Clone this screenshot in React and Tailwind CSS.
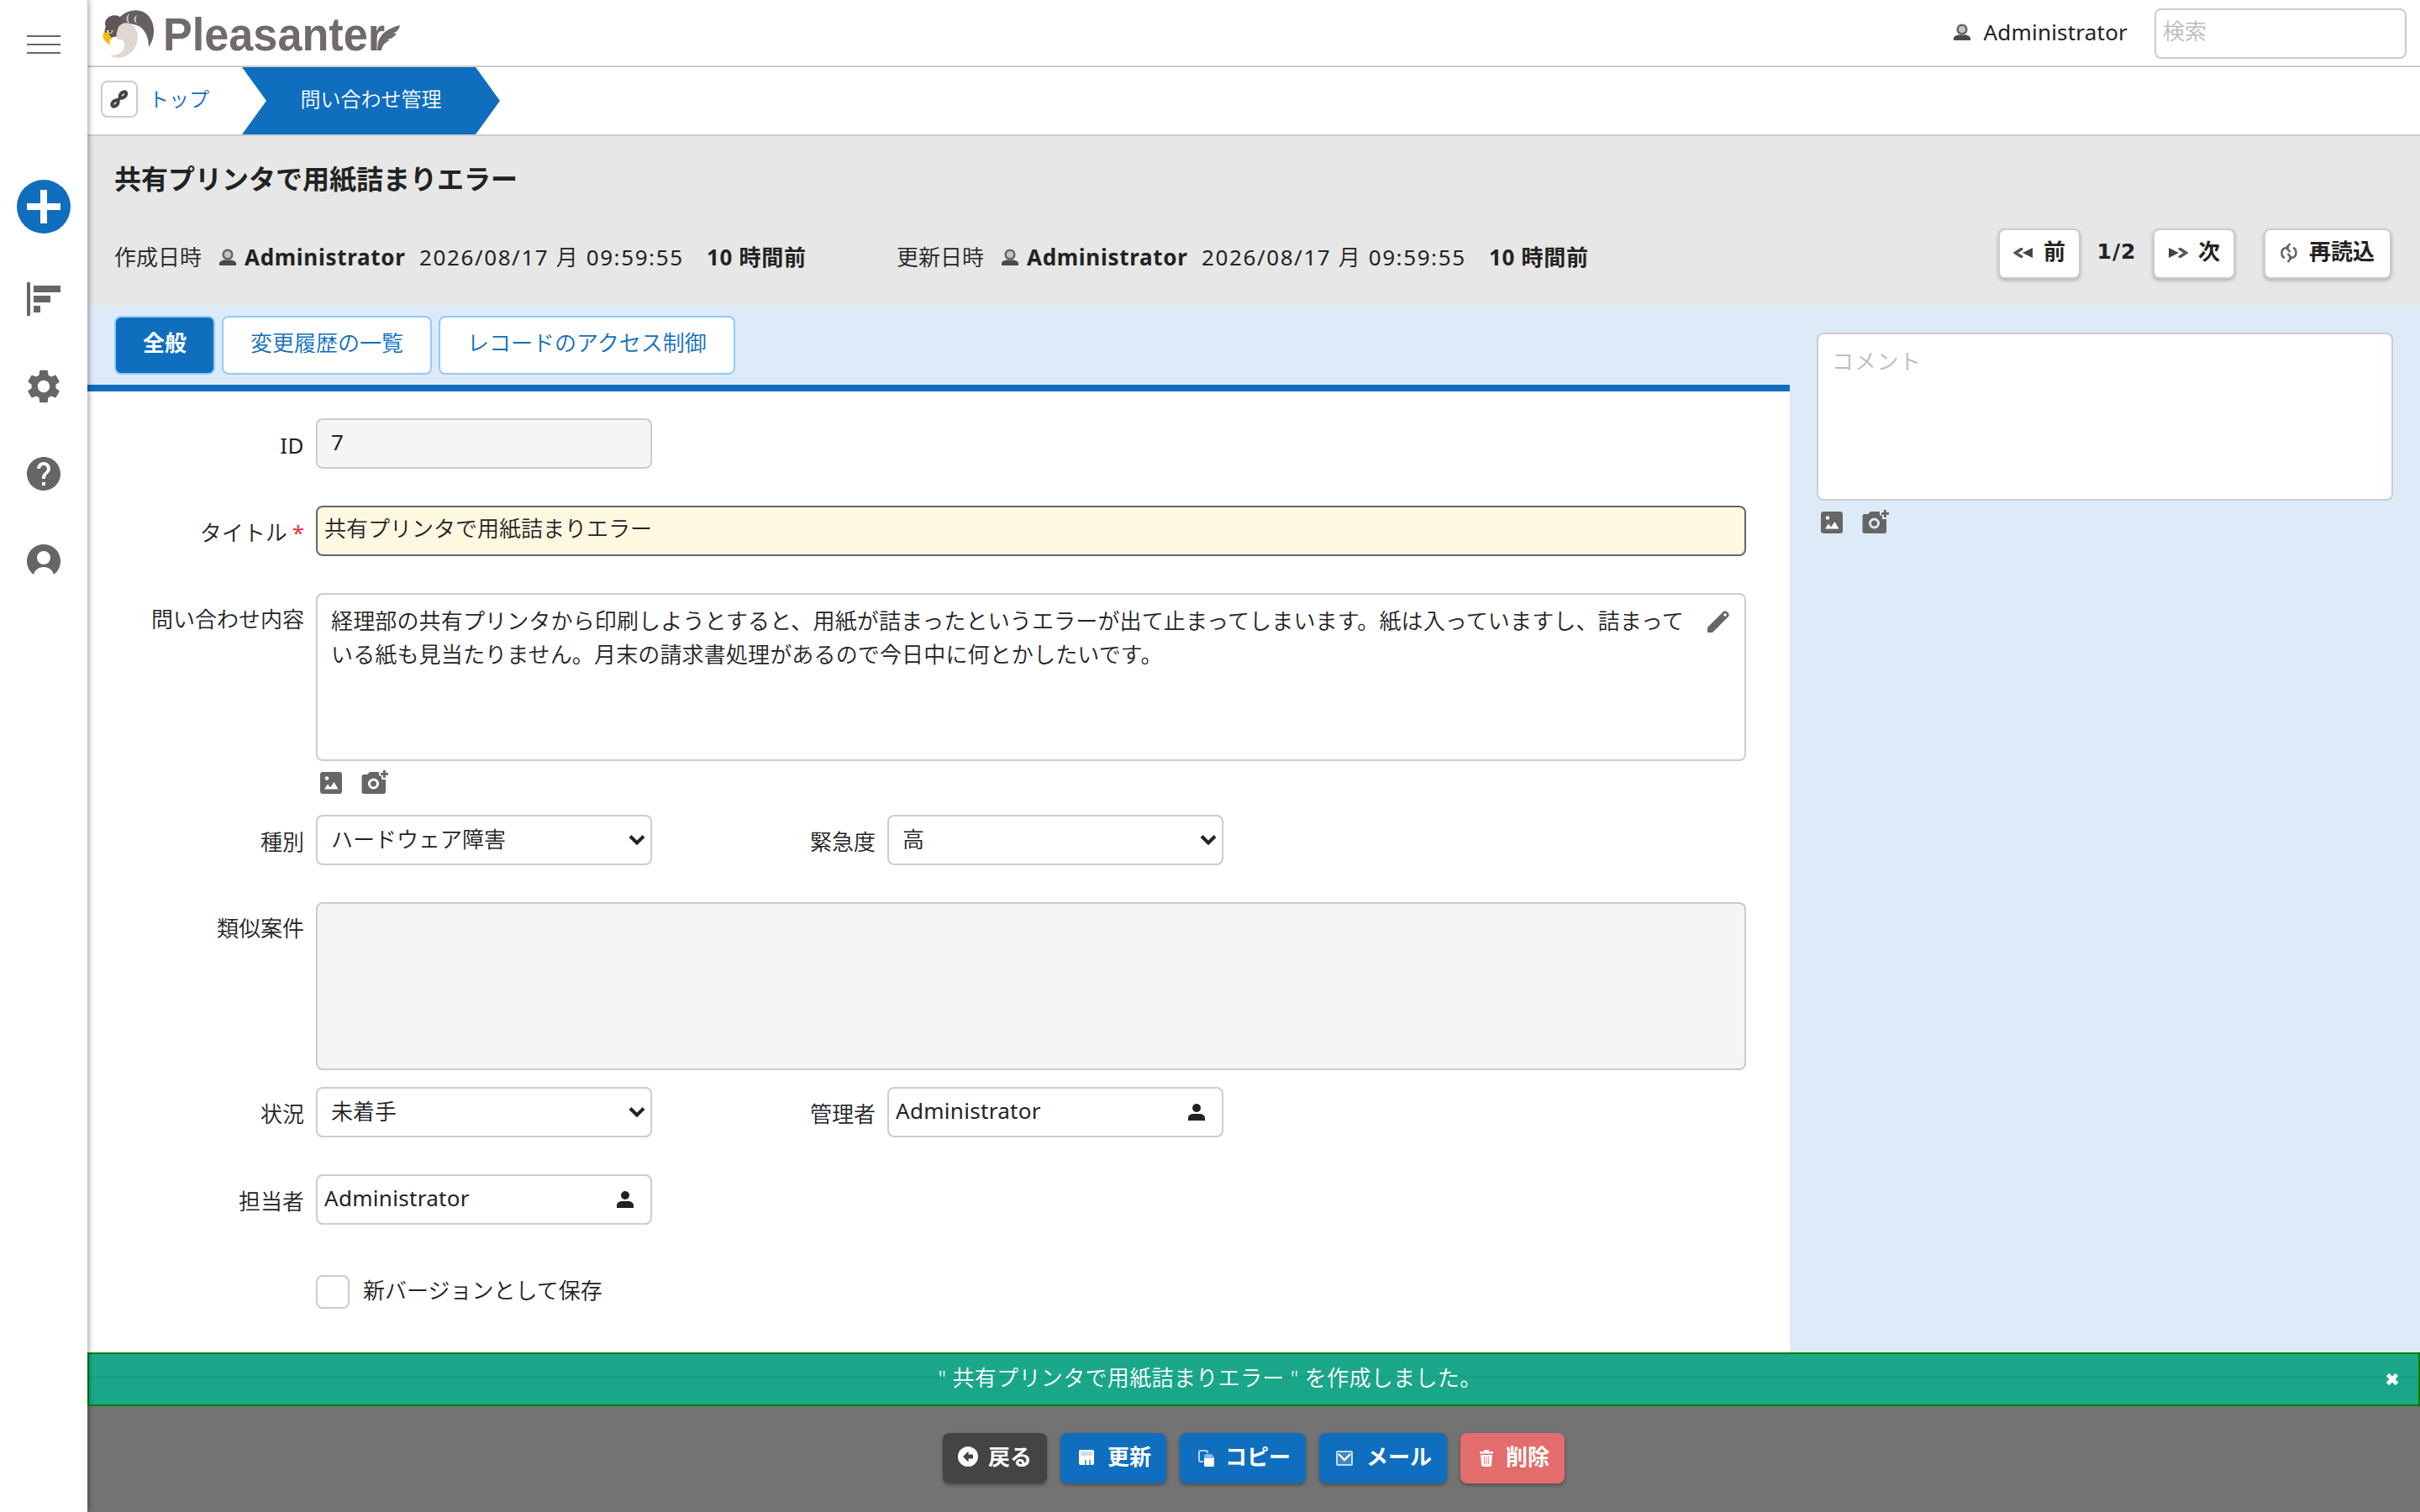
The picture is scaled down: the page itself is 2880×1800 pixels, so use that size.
import { MdSettings, MdHelp } from 'react-icons/md'

function PersonIcon({ className }) {
  return (
    <svg viewBox="0 0 20 20" className={className}>
      <path d="M0 20v-2.500c0-2.500 3-3 5.500-4h9c2.500 1 5.500 1.500 5.500 4V20z" fill="#4a4a4a" />
      <circle cx="10" cy="7" r="5.300" fill="#c4c4c4" stroke="#666" strokeWidth="2.600" />
    </svg>
  )
}

function UserIcon() {
  return (
    <svg viewBox="0 0 20 20" className="h-5 w-5" fill="#222">
      <circle cx="10" cy="5" r="5" />
      <path d="M0 20v-3c0-3.500 3.500-5 6-5h8c2.500 0 6 1.500 6 5v3z" />
    </svg>
  )
}

function AttachIcons({ className }) {
  return (
    <div className={`flex gap-[23px] ${className}`}>
      <svg viewBox="0 0 26 28" className="h-7 w-[26px]">
        <rect y="2" width="26" height="26" rx="3" fill="#666" />
        <circle cx="8" cy="9.500" r="2.200" fill="#fff" />
        <path d="M5 22.500l4-6 3 4 4.500-6.500 5 8.500z" fill="#fff" />
      </svg>
      <svg viewBox="0 0 32 28" className="h-7 w-8" fill="#666">
        <path
          fillRule="evenodd"
          d="M3 5h4l3-3h11v4.500h3V11h5v14.500a2.500 2.500 0 0 1-2.500 2.500H3a2.500 2.500 0 0 1-2.500-2.500v-18A2.500 2.500 0 0 1 3 5zM14.500 9.500a6.500 6.500 0 1 0 0 13a6.500 6.500 0 0 0 0-13zm0 3a3.500 3.500 0 1 1 0 7a3.500 3.500 0 0 1 0-7z"
        />
        <path d="M26 0h2.800v3H32v2.800h-3.200V9H26V5.800h-3V3h3z" />
      </svg>
    </div>
  )
}

function Logo() {
  return (
    <svg viewBox="0 0 360 60" className="ml-[18px] h-[60px] w-[360px] overflow-visible">
      <path d="M18 13C26 3 40-1 50 5C62 12 65 32 55 46C55 34 51 27 45 22C38 18 30 17 18 20z" fill="#665f63" />
      <path d="M3 20C2 12 10 6 19 9C24 12 24 18 22 24L19 33L4 36C2 32 2 25 4 21z" fill="#5e5659" />
      <path d="M19 22C25 14 37 16 41 28C44 40 38 53 27 57C21 60 13 59 9 56C20 57 28 49 26 42C25 37 21 36 18 37C15 34 17 28 19 22z" fill="#e0d7d0" />
      <path d="M32 6c-5 4-4 10 0 12c-2-4-2-8 0-12zM41 8c-5 3-4 8 0 10c-2-3-2-7 0-10z" fill="#d8d2ce" />
      <path d="M2 28C-1 32 0 38 9 44C8 40 9 38 11 36L8 31z" fill="#f2bd11" />
      <path d="M5 26h8l-2 4H5z" fill="#d8cf70" />
      <circle cx="9" cy="27.500" r="1.500" fill="#333" />
      <text x="72" y="50" textLength="264" lengthAdjust="spacingAndGlyphs" className="fill-[#716a6c] font-['Liberation_Sans',sans-serif] text-[55px] leading-none font-bold">
        Pleasanter
      </text>
      <path d="M328 40C331 30 339 24 354 20C353 25 350 28 346 30L350 30C346 35 342 37 338 37L342 38C336 41 333 43 332 50h-5z" fill="#716a6c" />
    </svg>
  )
}

function Sidebar() {
  return (
    <aside className="relative z-10 flex w-26 shrink-0 flex-col items-center bg-white shadow-[2px_0_6px_rgba(0,0,0,0.35)]">
      <div className="mt-[42px] flex flex-col gap-2">
        <div className="h-0.5 w-10 bg-[#666]" />
        <div className="h-0.5 w-10 bg-[#666]" />
        <div className="h-0.5 w-10 bg-[#666]" />
      </div>
      <div className="mt-[150px] flex h-16 w-16 items-center justify-center rounded-full bg-[#106ebe]">
        <svg viewBox="0 0 40 40" className="h-10 w-10" fill="#fff">
          <path d="M16 0h8v16h16v8H24v16h-8V24H0v-8h16z" />
        </svg>
      </div>
      <svg viewBox="0 0 40 40" className="mt-[58px] h-10 w-10" fill="#666">
        <path d="M0 0h4v40H0zM8 4h32v8H8zM8 16h20v8H8zM8 28h8v8H8z" />
      </svg>
      <MdSettings className="mt-15 h-12 w-12 text-[#666]" />
      <MdHelp className="mt-14 h-12 w-12 text-[#666]" />
      <svg viewBox="0 0 40 40" className="mt-15 h-10 w-10">
        <path
          fillRule="evenodd"
          fill="#666"
          d="M20 0a20 20 0 0 1 12 36C31 31 26 27 20 27S9 31 8 36A20 20 0 0 1 20 0zM20 8a8 8 0 1 0 0 16a8 8 0 0 0 0-16z"
        />
      </svg>
    </aside>
  )
}

function Header() {
  return (
    <header className="flex h-20 items-start border-b-2 border-[#ccc] bg-white">
      <div className="pt-[10px]"><Logo /></div>
      <div className="ml-auto flex h-[75px] items-center">
        <PersonIcon className="h-5 w-5" />
        <span className="ml-4 font-normal tracking-[0.2px]">Administrator</span>
      </div>
      <div className="mt-[10px] mr-4 ml-8 flex h-15 w-75 items-center rounded-lg border-2 border-[#ccc] pb-1.5 pl-2 text-[#bbb]">
        検索
      </div>
    </header>
  )
}

function Breadcrumb() {
  return (
    <nav className="flex h-[82px] border-b-2 border-[#ccc] bg-white">
      <div className="mt-4 ml-4 flex h-11 w-11 items-center justify-center rounded-lg border-2 border-[#ccc]">
        <svg viewBox="0 0 22 22" className="h-[22px] w-[22px]" fill="none" stroke="#444" strokeWidth="4">
          <ellipse cx="15.500" cy="6" rx="4.300" ry="2.800" transform="rotate(-45 15.500 6)" />
          <ellipse cx="6" cy="16" rx="4.300" ry="2.800" transform="rotate(-45 6 16)" />
          <path d="M8.500 13.500l4-5" />
        </svg>
      </div>
      <span className="ml-[13px] w-[111px] text-2xl leading-[76px] text-[#106ebe]">トップ</span>
      <div className="flex h-20 w-[307px] items-center justify-center bg-[#106ebe] pb-1 text-2xl text-white [clip-path:polygon(0_0,278px_0,100%_50%,278px_100%,0_100%,29px_50%)]">
        問い合わせ管理
      </div>
    </nav>
  )
}

function Meta({ label }) {
  return (
    <div className="flex items-center">
      <span className="w-[125px]">{label}</span>
      <PersonIcon className="h-5 w-5" />
      <span className="ml-[10px] w-[208px] font-bold tracking-[0.7px]">Administrator</span>
      <span className="w-[342px] font-normal tracking-[1.6px] whitespace-nowrap">
        2026/08/17 <span className="font-[350]">月</span> 09:59:55
      </span>
      <span className="w-[120px] font-bold whitespace-nowrap tracking-[0.7px]">10 時間前</span>
    </div>
  )
}

function NavButton({ className, icon, children }) {
  return (
    <div className={`flex h-15 items-center rounded-lg border-2 border-[#ccc] bg-white pb-0.5 font-bold shadow-[0_2px_4px_rgba(0,0,0,0.25)] ${className}`}>
      {icon}
      <span className="mb-1">{children}</span>
    </div>
  )
}

function RecordHeader() {
  return (
    <section className="h-[202px] bg-[#e7e7e7] pl-8">
      <h1 className="pt-[25px] text-[32px] leading-[52px] font-bold">共有プリンタで用紙詰まりエラー</h1>
      <div className="mt-[33px] flex h-15 items-center">
        <div className="flex gap-[106px] pt-2">
          <Meta label="作成日時" />
          <Meta label="更新日時" />
        </div>
        <div className="mr-[34px] ml-auto flex items-center">
          <NavButton
            className="w-[98px] gap-[13px] pl-4"
            icon={
              <svg viewBox="0 0 23 12" className="h-3 w-[23px]">
                <path d="M23 0v12L11 6z" fill="#444" />
                <path d="M11 0.500L2.500 6l8.500 5.500" fill="none" stroke="#555" strokeWidth="3.400" />
              </svg>
            }
          >
            前
          </NavButton>
          <span className="w-[86px] pb-1 text-center font-['DejaVu_Sans',sans-serif] text-[25px] font-bold tracking-[1px]">1/2</span>
          <NavButton
            className="w-[98px] gap-[12px] pl-[17px]"
            icon={
              <svg viewBox="0 0 23 12" className="h-3 w-[23px]">
                <path d="M0 0v12l12-6z" fill="#444" />
                <path d="M12 0.500L20.500 6l-8.500 5.500" fill="none" stroke="#555" strokeWidth="3.400" />
              </svg>
            }
          >
            次
          </NavButton>
          <NavButton
            className="ml-[34px] w-[152px] gap-[14px] pl-[18px]"
            icon={
              <svg viewBox="0 0 20 24" className="h-6 w-5" fill="none" stroke="#666" strokeWidth="2.600">
                <path d="M5 18C2 17 1.500 15 1.500 12S3 6 8 6h2M15 6c3 1 3.500 3 3.500 6s-1.500 6-6.500 6h-2M11.500 1L7 6l4.500 5M8.500 13l4.500 5-4.500 5" />
              </svg>
            }
          >
            再読込
          </NavButton>
        </div>
      </div>
    </section>
  )
}

function Field({ label, required, tall, children }) {
  return (
    <div className="flex">
      <div className={`w-68 shrink-0 pr-[14px] text-right whitespace-nowrap ${tall ? 'leading-[62px]' : 'leading-[64px]'}`}>
        {label}
        {required && <span className="ml-1.5 font-normal text-[#e33]">*</span>}
      </div>
      {children}
    </div>
  )
}

const box = 'rounded-lg border-2 border-[#ccc]'

function Select({ value }) {
  return (
    <div className={`flex h-15 w-100 items-center justify-between bg-white pr-[6px] pl-4 ${box}`}>
      <span className="mb-[3px]">{value}</span>
      <svg viewBox="0 0 20 14" className="h-[14px] w-5" fill="none" stroke="#222" strokeWidth="4">
        <path d="M2 2.500l8 8 8-8" />
      </svg>
    </div>
  )
}

function UserField() {
  return (
    <div className={`flex h-15 w-100 items-center justify-between bg-white pr-5 pl-2 ${box}`}>
      <span className="mb-1 font-normal tracking-[0.3px]">Administrator</span>
      <UserIcon />
    </div>
  )
}

function RecordForm() {
  return (
    <div className="flex-1 bg-white pt-8">
      <Field label={<span className="font-normal tracking-[0.5px]">ID</span>}>
        <div className={`flex h-15 w-100 items-center bg-[#f5f5f5] pb-1 pl-4 font-normal ${box}`}>7</div>
      </Field>
      <div className="mt-10">
        <Field label="タイトル" required>
          <div className="flex h-15 w-[1702px] items-center rounded-lg border-2 border-[#666] bg-[#fff8e1] pb-1.5 pl-2">
            共有プリンタで用紙詰まりエラー
          </div>
        </Field>
      </div>
      <div className="mt-10">
        <Field label="問い合わせ内容" tall>
          <div className={`flex h-50 w-[1702px] justify-between pt-[11px] pr-[18px] pl-4 ${box}`}>
            <p className="leading-[40px] tracking-[0.15px] whitespace-nowrap">
              経理部の共有プリンタから印刷しようとすると、用紙が詰まったというエラーが出て止まってしまいます。紙は入っていますし、詰まって
              <br />
              いる紙も見当たりません。月末の請求書処理があるので今日中に何とかしたいです。
            </p>
            <svg viewBox="0 0 26 26" className="mt-2 h-[26px] w-[26px]">
              <path d="M0 26v-6L18.500 1.500a3.500 3.500 0 0 1 5 0l1 1a3.500 3.500 0 0 1 0 5L6 26z" fill="#666" />
              <circle cx="21" cy="5" r="1.800" fill="#fff" />
            </svg>
          </div>
        </Field>
      </div>
      <AttachIcons className="mt-[11px] ml-[277px]" />
      <div className="mt-[25px] flex">
        <Field label="種別"><Select value="ハードウェア障害" /></Field>
        <div className="ml-2"><Field label="緊急度"><Select value="高" /></Field></div>
      </div>
      <div className="mt-10">
        <Field label="類似案件" tall>
          <div className={`h-50 w-[1702px] bg-[#f5f5f5] ${box}`} />
        </Field>
      </div>
      <div className="mt-5 flex">
        <Field label="状況"><Select value="未着手" /></Field>
        <div className="ml-2"><Field label="管理者"><UserField /></Field></div>
      </div>
      <div className="mt-10">
        <Field label="担当者"><UserField /></Field>
      </div>
      <div className="mt-[54px] ml-68 flex h-[44px] items-center gap-4">
        <div className={`h-10 w-10 bg-white ${box}`} />
        <span className="mb-1">新バージョンとして保存</span>
      </div>
    </div>
  )
}

function ActionButton({ className, icon, children }) {
  return (
    <div className={`flex h-15 items-center rounded-lg pr-[18px] shadow-[0_2px_4px_rgba(0,0,0,0.35)] ${className}`}>
      {icon}
      <span className="mb-[5px] ml-auto">{children}</span>
    </div>
  )
}

function Actions() {
  return (
    <footer className="flex h-[126px] justify-center gap-4 bg-[#737373] pt-8 font-bold text-white">
      <ActionButton
        className="w-[124px] bg-[#444] pl-[18px]"
        icon={
          <svg viewBox="0 0 24 24" className="mb-1 h-6 w-6">
            <circle cx="12" cy="12" r="12" fill="#fff" />
            <path d="M12.500 5.500v4H18v5h-5.500v4L6 12z" fill="#444" />
          </svg>
        }
      >
        戻る
      </ActionButton>
      <ActionButton
        className="w-[126px] bg-[#106ebe] pl-[22px]"
        icon={
          <svg viewBox="0 0 18 18" className="mb-0.5 h-[18px] w-[18px]">
            <rect width="18" height="18" rx="2" fill="#fff" />
            <path d="M2 2h14v5H2z" fill="#c9dff2" />
            <path d="M7 12h2v6H7zM12 12h2v6h-2z" fill="#6ba4d6" />
          </svg>
        }
      >
        更新
      </ActionButton>
      <ActionButton
        className="w-[150px] bg-[#106ebe] pl-[22px]"
        icon={
          <svg viewBox="0 0 20 20" className="h-5 w-5">
            <rect x="1" y="1" width="10" height="13" rx="2" fill="none" stroke="#b7d3ec" strokeWidth="2" />
            <path d="M8 4h9l3 4v10a2 2 0 0 1-2 2H8a2 2 0 0 1-2-2V6a2 2 0 0 1 2-2z" fill="#106ebe" />
            <path d="M9 5h7l3 4v9a2 2 0 0 1-2 2H9a2 2 0 0 1-2-2V7a2 2 0 0 1 2-2z" fill="#8dbbe3" />
            <path d="M7 10h12v8a2 2 0 0 1-2 2H9a2 2 0 0 1-2-2z" fill="#fff" />
          </svg>
        }
      >
        コピー
      </ActionButton>
      <ActionButton
        className="w-[152px] bg-[#106ebe] pl-5"
        icon={
          <svg viewBox="0 0 20 18" className="h-[18px] w-5" fill="none">
            <rect x="1" y="1" width="18" height="16" rx="1" stroke="#c3daef" strokeWidth="2" fill="#3d87c9" />
            <path d="M3 4l7 7 7-7" stroke="#fff" strokeWidth="2.400" />
          </svg>
        }
      >
        メール
      </ActionButton>
      <ActionButton
        className="w-[124px] bg-[#e36c6c] pl-[22px]"
        icon={
          <svg viewBox="0 0 18 20" className="h-5 w-[18px]">
            <path d="M6 0h6v2h5v2.500H1V2h5z" fill="#fff" />
            <path d="M2 6h14l-1 12a2 2 0 0 1-2 2H5a2 2 0 0 1-2-2z" fill="#fff" />
            <path d="M6.500 8v9M9 8v9M11.500 8v9" stroke="#e99595" strokeWidth="1.200" />
          </svg>
        }
      >
        削除
      </ActionButton>
    </footer>
  )
}

export default function App() {
  return (
    <div className="flex h-[1800px] w-[2880px] overflow-hidden bg-white font-['Noto_Sans','Noto_Sans_CJK_JP',sans-serif] text-[26px] leading-[40px] font-[350] text-[#222]">
      <Sidebar />
      <div className="flex min-w-0 flex-1 flex-col">
        <Header />
        <Breadcrumb />
        <RecordHeader />
        <main className="flex h-[1246px] bg-[#ddebf8]">
          <div className="flex w-[2026px] flex-col">
            <div className="flex h-[102px] gap-2 border-b-8 border-[#106ebe] pt-3 pl-8">
              <div className="h-[70px] rounded-lg border-2 border-[#90caff] bg-[#106ebe] px-8 leading-[60px] font-bold text-white">全般</div>
              <div className="h-[70px] rounded-lg border-2 border-[#90caff] bg-white px-8 leading-[60px] text-[#106ebe]">変更履歴の一覧</div>
              <div className="h-[70px] rounded-lg border-2 border-[#90caff] bg-white px-8 leading-[60px] text-[#106ebe]">レコードのアクセス制御</div>
            </div>
            <RecordForm />
          </div>
          <div className="pt-8 pl-8">
            <div className={`h-50 w-[686px] bg-white pt-3 pl-4 tracking-[0.7px] text-[#bbb] ${box}`}>コメント</div>
            <AttachIcons className="mt-[11px] ml-[5px]" />
          </div>
        </main>
        <div className="flex h-16 items-center border-2 border-[#008000] bg-linear-to-b from-[#1ba88a] from-42% via-[#159f80] via-44% to-[#1aa689] to-49% text-white">
          <span className="flex-1 pr-[66px] pb-1 text-center tracking-[0.35px] whitespace-pre">" 共有プリンタで用紙詰まりエラー " を作成しました。</span>
          <svg viewBox="0 0 14 14" className="mr-6 h-[14px] w-[14px]" stroke="#fff" strokeWidth="5">
            <path d="M1.500 1.500l11 11M12.500 1.500l-11 11" />
          </svg>
        </div>
        <Actions />
      </div>
    </div>
  )
}
